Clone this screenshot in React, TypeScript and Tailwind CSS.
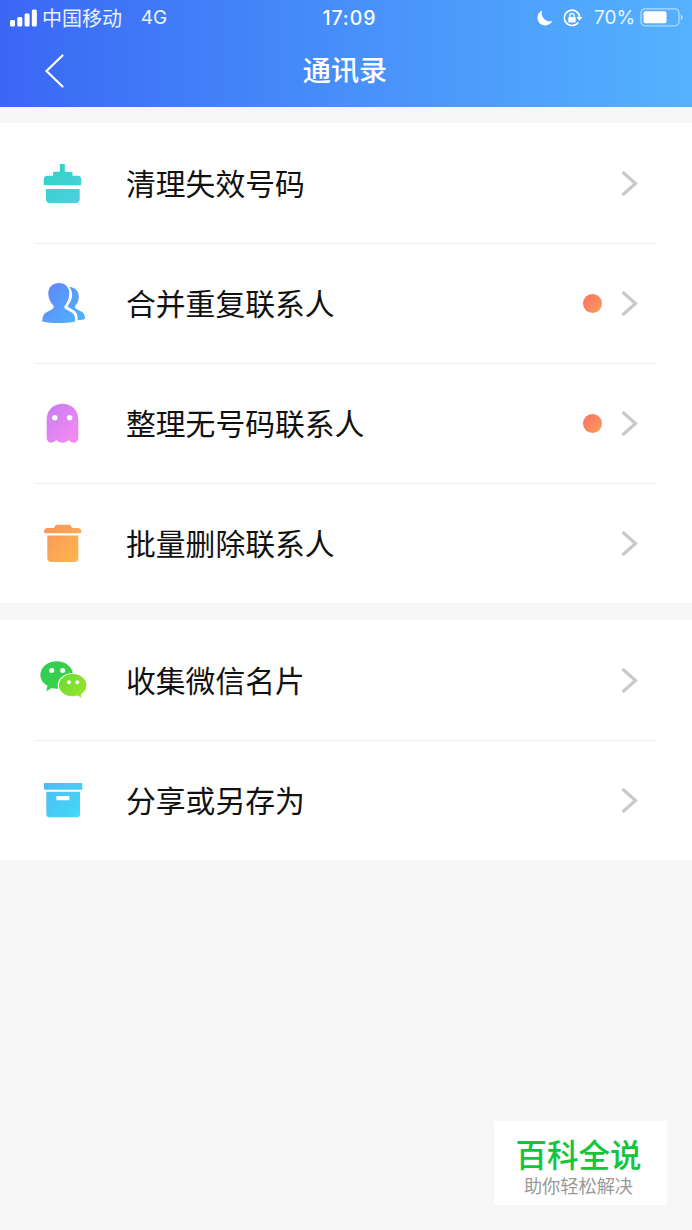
import React from 'react';

interface MenuRow {
  label: string;
  icon: React.ReactNode;
  badge?: boolean;
}

interface GradientProps {
  id: string;
  from: string;
  to: string;
}

const Gradient: React.FC<GradientProps> = ({ id, from, to }) => (
  <defs>
    <linearGradient id={id} x1="0" y1="0" x2="48" y2="48" gradientUnits="userSpaceOnUse">
      <stop offset="0.1" stopColor={from} />
      <stop offset="0.9" stopColor={to} />
    </linearGradient>
  </defs>
);

const BrushIcon = () => (
  <svg viewBox="0 0 48 48" className="w-12 h-12" fill="url(#brush)">
    <Gradient id="brush" from="#2fd3c3" to="#4fcfe0" />
    <path d="M20.800 5h5v7.800h6.700q1 0 1 1v2.900h5q3.800 0 3.800 4v4.300q0 1.300-1.300 1.300H6q-1.300 0-1.300-1.300v-4.300q0-4 3.800-4h5.500v-2.900q0-1 1-1h5.800z" />
    <path d="M7 30h33.700v10q0 4-4 4H11q-4 0-4-4z" />
  </svg>
);

const PeopleIcon = () => (
  <svg viewBox="0 0 48 48" className="w-12 h-12" fill="url(#people)">
    <Gradient id="people" from="#6286f8" to="#4fb4fb" />
    <path d="M30.500 8c6 .4 9.300 4.300 9.300 9.200 0 4.200-1.300 6.900-3.300 9.400-1 1.200-.6 2.600.9 3.300l4.800 2.600c3 1.500 4 4 3.800 7.400q-3.500 1.200-7.300 1.200c-.1-7-1.600-8.600-5.400-10.600l-3.800-2.200c-.8-.5-.8-1.400-.2-2.200 4.500-6 5.200-12.500 1.200-18.100z" />
    <path d="M20 4c6.600 0 10.300 4.300 10.300 10.300 0 5-1.700 9.100-4.200 11.900-1.200 1.300-.9 3.200.8 4.100l5 2.600c3.500 1.800 4.500 5.100 4.200 9.500-5 1.300-9.500 1.500-16.200 1.500-6.300 0-11.300-.2-16.600-1.500-.2-4.600 1.200-7.700 4.600-9.500l5.200-2.600c1.700-.9 2.100-2.800.9-4.200C11.200 23 9.300 19.200 9.300 14.500 9.300 8.300 13.400 4 20 4z" />
  </svg>
);

const GhostIcon = () => (
  <svg viewBox="0 0 48 48" className="w-12 h-12" fill="url(#ghost)">
    <Gradient id="ghost" from="#c67cf3" to="#f98df0" />
    <path d="M7.700 20.500C7.700 11 14.500 4.700 23.500 4.700S39.300 11 39.300 20.500v18.300c0 3-1.800 4.900-4.200 4.900-2 0-3.800-.9-5.500-2.700-3.200 3.600-9 3.600-12.200 0-1.700 1.800-3.500 2.700-5.500 2.700-2.400 0-4.200-1.900-4.200-4.900z" />
    <circle cx="15.800" cy="18.700" r="2.700" fill="#fff" />
    <circle cx="30.700" cy="18.700" r="2.700" fill="#fff" />
  </svg>
);

const TrashIcon = () => (
  <svg viewBox="0 0 48 48" className="w-12 h-12" fill="url(#trash)">
    <Gradient id="trash" from="#f8935c" to="#fdb84c" />
    <path d="M18 5.700h12q1.200 0 2 1.300l1.100 1.900h5.400q3.800 0 3.800 4.200 0 1.200-1.200 1.200H6.200Q5 14.300 5 13.100q0-4.200 3.800-4.200H15L16 7q.8-1.300 2-1.300z" />
    <path d="M8.300 16.400h31v22.600q0 4-4 4h-23q-4 0-4-4z" />
  </svg>
);

const WechatIcon = () => (
  <svg viewBox="0 0 48 48" className="w-12 h-12">
    <Gradient id="wechat" from="#2fcc57" to="#3fd936" />
    <defs>
      <linearGradient id="wechatSmall" x1="20" y1="20" x2="46" y2="40" gradientUnits="userSpaceOnUse">
        <stop stopColor="#66dc2e" />
        <stop offset="1" stopColor="#9be52f" />
      </linearGradient>
    </defs>
    <path d="M17.700 5.300C26.700 5.300 34 11.400 34 19s-7.300 13.700-16.300 13.700q-2.600 0-4.900-.7l-5.600 3.200 1.300-5.600C4 27.300 1.400 23.400 1.400 19 1.400 11.400 8.700 5.300 17.700 5.300z" fill="url(#wechat)" />
    <path
      d="M33.700 17.500c8 0 14.400 5.200 14.400 11.700 0 3.700-2.200 7.100-5.600 9.200l.4 4.300-4.500-2.600q-2.200.7-4.700.7c-8 0-14.400-5.100-14.400-11.600s6.400-11.700 14.400-11.700z"
      fill="url(#wechatSmall)"
      stroke="#fff"
      strokeWidth="1.200"
    />
    <g fill="#fff">
      <circle cx="12.700" cy="14.600" r="2.500" />
      <circle cx="23.700" cy="14.600" r="2.500" />
      <circle cx="30" cy="26.200" r="2" />
      <circle cx="38.300" cy="26.200" r="2" />
    </g>
  </svg>
);

const ArchiveIcon = () => (
  <svg viewBox="0 0 48 48" className="w-12 h-12" fill="url(#archive)">
    <Gradient id="archive" from="#50b9f3" to="#42dcf8" />
    <rect x="5" y="7" width="38.300" height="6.700" rx="0.800" />
    <path fillRule="evenodd" d="M7.300 15.700h33.700v22.600q0 3-3 3H10.300q-3 0-3-3zM17.400 19.900v4.300h12.900v-4.300z" />
  </svg>
);

const manageRows: MenuRow[] = [
  { label: '清理失效号码', icon: <BrushIcon /> },
  { label: '合并重复联系人', icon: <PeopleIcon />, badge: true },
  { label: '整理无号码联系人', icon: <GhostIcon />, badge: true },
  { label: '批量删除联系人', icon: <TrashIcon /> },
];

const shareRows: MenuRow[] = [
  { label: '收集微信名片', icon: <WechatIcon /> },
  { label: '分享或另存为', icon: <ArchiveIcon /> },
];

const MenuGroup: React.FC<{ rows: MenuRow[] }> = ({ rows }) => (
  <ul className="bg-white px-[35px]">
    {rows.map((row) => (
      <li
        key={row.label}
        className="flex items-center h-[120px] pl-1 pr-[19px] pb-px border-t border-[#f1f1f1] first:border-white"
      >
        {row.icon}
        <span className="ml-[39px] pb-[3px] text-[29.8px] leading-[44px] text-[#111]">{row.label}</span>
        <span className="ml-auto flex items-center gap-[18px]">
          {row.badge && <span className="size-[19px] rounded-full bg-linear-to-br from-[#f9696a] to-[#fba150]" />}
          <svg viewBox="0 0 18 28" className="w-[18px] h-7" fill="none" stroke="#c9c9c9" strokeWidth="3.200">
            <path d="M2.500 3L15.500 14.500L2.500 26" />
          </svg>
        </span>
      </li>
    ))}
  </ul>
);

const StatusBar = () => (
  <div className="flex items-center h-[35px] pl-2.5 pr-2 text-xl text-white/90">
    <svg viewBox="0 0 27 18" className="w-[27px] h-[18px]" fill="#fff">
      <rect x="0" y="11" width="5" height="6.500" rx="1.500" />
      <rect x="7.300" y="8" width="5" height="9.500" rx="1.500" />
      <rect x="14.600" y="4.500" width="5" height="13" rx="1.500" />
      <rect x="21.900" y="0.500" width="5" height="17" rx="1.500" />
    </svg>
    <span className="ml-[5px] w-[99px]">中国移动</span>
    <span className="w-[182px] pt-0.5 font-[Inter] text-[19px]">4G</span>
    <span className="w-[214px] pt-0.5 font-[Inter] text-[19.5px] tracking-[0.9px] font-medium text-white">17:09</span>
    <svg viewBox="0 0 18 18" className="w-[18px] h-[18px]" fill="#fff">
      <path d="M6 1.500C3 3 1.500 5.700 1.500 8.700c0 4.400 3.300 7.700 7.700 7.700 3 0 5.900-1.600 7.300-4.400C10.500 13.800 4.500 9 6 1.500z" />
    </svg>
    <svg viewBox="0 0 20 18" className="ml-[9px] w-5 h-[18px]" fill="none" stroke="#fff" strokeWidth="1.600">
      <path d="M15.200 13.500A7.700 7.700 0 1 1 16.700 8" />
      <path d="M13.500 8h6l-3 3.800z" fill="#fff" stroke="none" />
      <rect x="5.300" y="8" width="7.400" height="5.400" rx="0.600" fill="#fff" stroke="none" />
      <path d="M6.900 8.500V6.600a2.100 2.100 0 0 1 4.200 0v1.900" strokeWidth="1.300" />
    </svg>
    <span className="ml-[11px] w-[46px] shrink-0 pt-0.5 font-[Inter] text-[19px]">70%</span>
    <svg viewBox="0 0 44 20" className="w-11 h-5 shrink-0">
      <rect x="1" y="0.800" width="38" height="17" rx="4" fill="none" stroke="#fff" strokeOpacity="0.550" strokeWidth="1.300" />
      <rect x="3.500" y="3.300" width="23" height="12" rx="1.800" fill="#fff" />
      <path d="M40.800 6.300v6q2-.8 2-3t-2-3z" fill="#fff" fillOpacity="0.550" />
    </svg>
  </div>
);

const Header = () => (
  <header className="h-[107px] bg-linear-to-r from-[#3b66f5] via-[#488ffa] to-[#55b2fe] text-white">
    <StatusBar />
    <div className="grid grid-cols-3 items-center h-[72px]">
      <svg viewBox="0 0 22 36" className="ml-[44px] w-[22px] h-9" fill="none" stroke="#fff" strokeWidth="2.200" strokeLinecap="round">
        <path d="M18.500 2.500L2.500 18L18.500 33.500" />
      </svg>
      <h1 className="pb-[4px] pr-0.5 text-center text-[28.2px] leading-[40px] font-medium">通讯录</h1>
    </div>
  </header>
);

const App: React.FC = () => (
  <div className="flex flex-col h-[1230px] w-[692px] overflow-hidden bg-[#f7f7f7] font-['Noto_Sans_CJK_SC',sans-serif]">
    <Header />
    <main className="flex flex-col gap-[17px] pt-4">
      <MenuGroup rows={manageRows} />
      <MenuGroup rows={shareRows} />
    </main>
    <footer className="mt-auto mb-[25px] mr-[25px] self-end w-[173px] h-[84px] pt-[14px] pr-1 bg-white flex flex-col items-center">
      <p className="text-[31.500px] leading-[37px] font-medium text-[#12c63c]">百科全说</p>
      <p className="text-[18.200px] leading-[26px] text-[#999]">助你轻松解决</p>
    </footer>
  </div>
);

export default App;
